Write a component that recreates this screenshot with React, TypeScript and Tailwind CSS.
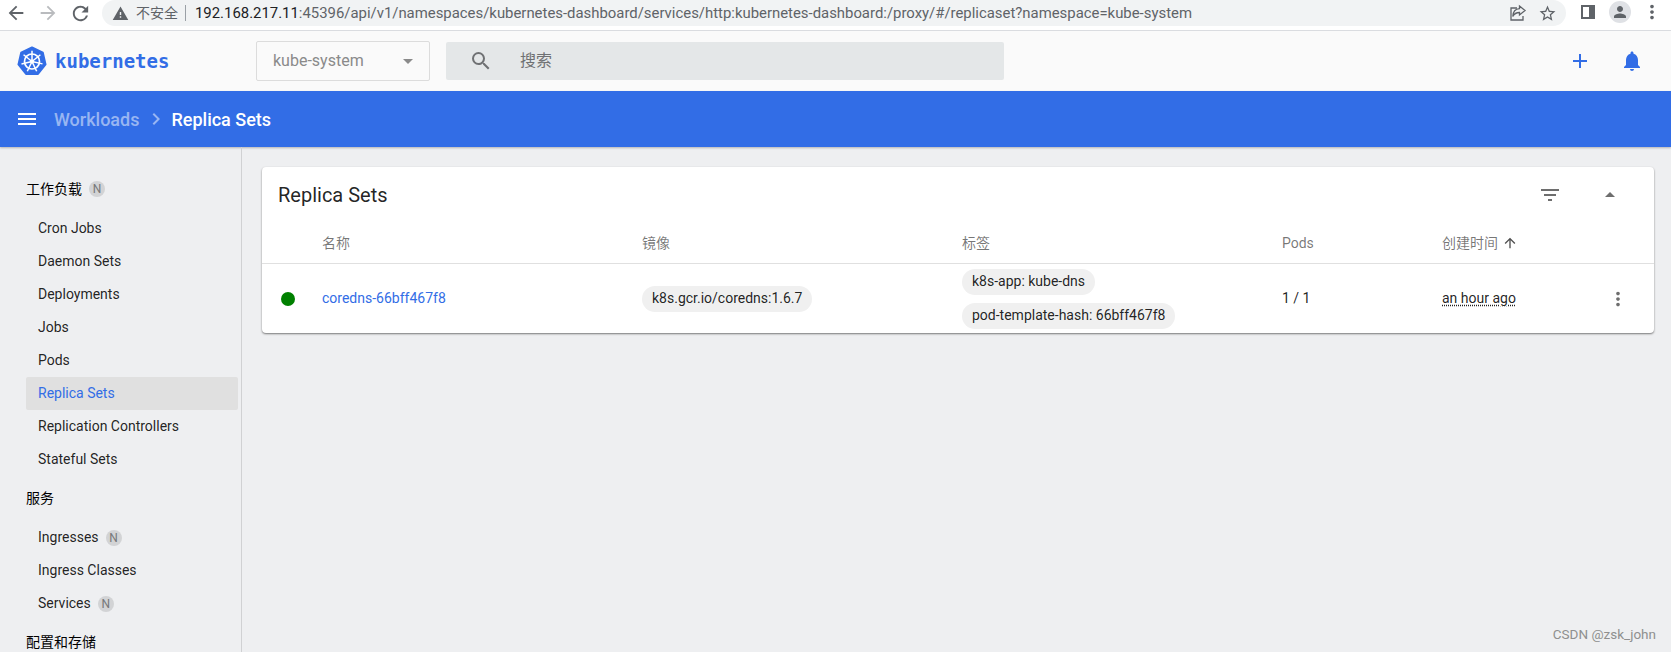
import type { ReactNode } from "react";
import {
  MdAdd,
  MdArrowBack,
  MdArrowDropDown,
  MdArrowDropUp,
  MdArrowForward,
  MdArrowUpward,
  MdChevronRight,
  MdFilterList,
  MdMenu,
  MdMoreVert,
  MdNotifications,
  MdPerson,
  MdRefresh,
  MdSearch,
  MdStarBorder,
  MdWarning,
} from "react-icons/md";

const workloads = [
  "Cron Jobs",
  "Daemon Sets",
  "Deployments",
  "Jobs",
  "Pods",
  "Replica Sets",
  "Replication Controllers",
  "Stateful Sets",
];

function KubeLogo() {
  const spokes = [0, 51.4, 102.8, 154.3, 205.7, 257.1, 308.6];
  return (
    <svg width="30" height="31" viewBox="0 0 32 32">
      <polygon
        points="16,1 27.6,6.6 30.5,19.2 22.4,29.3 9.6,29.3 1.5,19.2 4.4,6.6"
        fill="#326de6"
        stroke="#326de6"
        strokeWidth="2"
        strokeLinejoin="round"
      />
      <circle cx="16" cy="16" r="8" fill="none" stroke="#fff" strokeWidth="1.8" />
      {spokes.map((a) => (
        <line
          key={a}
          x1="16"
          y1="16"
          x2="16"
          y2="4.5"
          stroke="#fff"
          strokeWidth="1.6"
          transform={`rotate(${a} 16 16)`}
        />
      ))}
      <circle cx="16" cy="16" r="2.2" fill="#fff" />
    </svg>
  );
}

function NewBadge() {
  return (
    <span className="ml-[7px] flex h-[16px] w-[16px] items-center justify-center rounded-full bg-[#d2d3d5] text-[12px] text-[#77787a]">
      N
    </span>
  );
}

function NavSection({ title, badge, children }: { title: string; badge?: boolean; children?: ReactNode }) {
  return (
    <div className="mb-[6px]">
      <div className="mb-[6px] flex h-[33px] items-center pb-[2px] pl-[26px] text-[14px] leading-[16px] text-black">
        {title}
        {badge && <NewBadge />}
      </div>
      {children}
    </div>
  );
}

function NavItem({ label, badge, active }: { label: string; badge?: boolean; active?: boolean }) {
  return (
    <div
      className={
        active
          ? "ml-[26px] mr-[3px] flex h-[33px] items-center rounded-[2px] bg-[#e0e0e0] pl-[12px] text-[14px] text-[#326de6]"
          : "ml-[26px] mr-[3px] flex h-[33px] items-center pl-[12px] text-[14px] text-[#000000de]"
      }
    >
      {label}
      {badge && <NewBadge />}
    </div>
  );
}

function Chip({ children }: { children: ReactNode }) {
  return (
    <span className="flex h-[26px] w-fit items-center rounded-full bg-[#f0f0f0] px-[10px] text-[14px] text-[#000000de]">
      {children}
    </span>
  );
}

function BrowserBar() {
  return (
    <div className="flex h-[31px] items-start border-b border-[#dadce0] bg-white text-[#5f6368]">
      <div className="flex h-[26px] w-[102px] shrink-0 items-center pl-[5px]">
        <MdArrowBack size={22} className="text-[#5f6368]" />
        <MdArrowForward size={22} className="ml-[10px] text-[#b9bbbe]" />
        <MdRefresh size={23} className="ml-[10px] text-[#5f6368]" />
      </div>
      <div className="flex h-[26px] w-[1464px] items-center rounded-r-full rounded-l-full bg-[#f1f3f4] pl-[10px] pr-[9px]">
        <MdWarning size={17} className="text-[#5f6368]" />
        <span className="ml-[7px] text-[14px] text-[#5f6368]">不安全</span>
        <span className="ml-[7px] h-[16px] w-px bg-[#9aa0a6]" />
        <span className="ml-[9px] text-[14.9px] text-[#5f6368]">
          <span className="text-[#202124]">192.168.217.11</span>
          :45396/api/v1/namespaces/kubernetes-dashboard/services/http:kubernetes-dashboard:/proxy/#/replicaset?namespace=kube-system
        </span>
        <svg className="ml-auto" width="18" height="18" viewBox="0 0 18 18" fill="none" stroke="#5f6368" strokeWidth="1.3">
          <path d="M8 4H2v12h12v-4" />
          <path d="M10.5 2l5.5 4.5-5.5 4.5V8.500C7 8.500 5 10 3.800 12.500 4 8 6.500 5 10.500 4.700z" />
        </svg>
        <MdStarBorder size={19} className="ml-[11px] text-[#5f6368]" />
      </div>
      <div className="ml-[15px] mt-[5px] flex h-[14px] w-[14px] justify-end border-[2px] border-[#5f6368] bg-white">
        <span className="h-full w-[4px] bg-[#5f6368]" />
      </div>
      <div className="ml-[14px] mt-[1px] flex h-[22px] w-[22px] items-center justify-center rounded-full bg-[#dfe1e5]">
        <MdPerson size={18} className="text-[#5f6368]" />
      </div>
      <MdMoreVert size={22} className="ml-[10px] mt-[1px] text-[#5f6368]" />
    </div>
  );
}

function TopNav() {
  return (
    <div className="flex h-[60px] items-center bg-[#fafafa]">
      <div className="flex w-[256px] shrink-0 items-center pl-[17px]">
        <KubeLogo />
        <span className="ml-[8px] font-['DejaVu_Sans_Mono',monospace] text-[19px] font-bold text-[#326de6]">
          kubernetes
        </span>
      </div>
      <div className="flex h-[40px] w-[174px] items-center rounded-[2px] border border-[#dcdcdc] bg-[#fafafa] pl-[16px] text-[16px] text-[#8a8a8a]">
        kube-system
        <MdArrowDropDown size={24} className="ml-auto mr-[9px] text-[#8a8a8a]" />
      </div>
      <div className="ml-[16px] flex h-[38px] w-[558px] items-center rounded-[2px] bg-[#e4e7e8] pl-[23px] text-[16px] text-[#6f7173]">
        <MdSearch size={24} className="text-[#6f7173]" />
        <span className="ml-[27px]">搜索</span>
      </div>
      <MdAdd size={24} className="ml-[564px] text-[#326de6]" />
      <MdNotifications size={24} className="ml-[28px] text-[#326de6]" />
    </div>
  );
}

function ActionBar() {
  return (
    <div className="flex h-[56px] items-center bg-[#326de6] pl-[15px] text-[18px] font-medium shadow-[0_1px_2px_#00000040]">
      <MdMenu size={24} className="text-white" />
      <span className="ml-[15px] text-[#ffffff80]">Workloads</span>
      <MdChevronRight size={24} className="ml-[5px] text-[#ffffff80]" />
      <span className="ml-[3px] text-white">Replica Sets</span>
    </div>
  );
}

function Sidebar() {
  return (
    <aside className="h-full w-[242px] shrink-0 border-r border-[#d0d1d3] pt-[26px]">
      <NavSection title="工作负载" badge>
        {workloads.map((w) => (
          <NavItem key={w} label={w} active={w === "Replica Sets"} />
        ))}
      </NavSection>
      <NavSection title="服务">
        <NavItem label="Ingresses" badge />
        <NavItem label="Ingress Classes" />
        <NavItem label="Services" badge />
      </NavSection>
      <NavSection title="配置和存储" />
    </aside>
  );
}

function ReplicaCard() {
  return (
    <section className="h-[166px] w-[1392px] rounded-[4px] bg-white shadow-[0_1px_2px_#00000080]">
      <div className="flex h-[56px] items-center pl-[16px] text-[20px] text-[#000000de]">
        Replica Sets
        <MdFilterList size={24} className="ml-auto text-[#6e6e6e]" />
        <MdArrowDropUp size={24} className="ml-[36px] mr-[32px] text-[#6e6e6e]" />
      </div>
      <div className="grid h-[41px] grid-cols-[60px_320px_320px_320px_160px_1fr] items-center border-b border-[#e0e0e0] text-[14px] text-[#0000008a]">
        <span />
        <span>名称</span>
        <span>镜像</span>
        <span>标签</span>
        <span>Pods</span>
        <span className="flex items-center">
          创建时间
          <MdArrowUpward size={16} className="ml-[4px] text-[#000000b0]" />
        </span>
      </div>
      <div className="grid h-[69px] grid-cols-[60px_320px_320px_320px_160px_1fr] items-center text-[14px] text-[#000000de]">
        <span className="ml-[19px] h-[14px] w-[14px] rounded-full bg-[#008000]" />
        <span className="text-[#326de6]">coredns-66bff467f8</span>
        <Chip>k8s.gcr.io/coredns:1.6.7</Chip>
        <div className="flex flex-col gap-[8px]">
          <Chip>k8s-app: kube-dns</Chip>
          <Chip>pod-template-hash: 66bff467f8</Chip>
        </div>
        <span>1 / 1</span>
        <div className="flex items-center">
          <span className="underline decoration-dotted underline-offset-[2px]">an hour ago</span>
          <MdMoreVert size={22} className="ml-[91px] text-[#6e6e6e]" />
        </div>
      </div>
    </section>
  );
}

export default function App() {
  return (
    <div className="relative flex h-[652px] w-[1671px] flex-col overflow-hidden bg-[#eeeff1] font-['Roboto','Noto_Sans_CJK_SC',sans-serif]">
      <BrowserBar />
      <TopNav />
      <ActionBar />
      <div className="flex min-h-0 flex-1">
        <Sidebar />
        <main className="pl-[20px] pt-[20px]">
          <ReplicaCard />
        </main>
      </div>
      <span className="absolute bottom-[8px] right-[15px] text-[13.5px] text-[#8f8f8f]">CSDN @zsk_john</span>
    </div>
  );
}
